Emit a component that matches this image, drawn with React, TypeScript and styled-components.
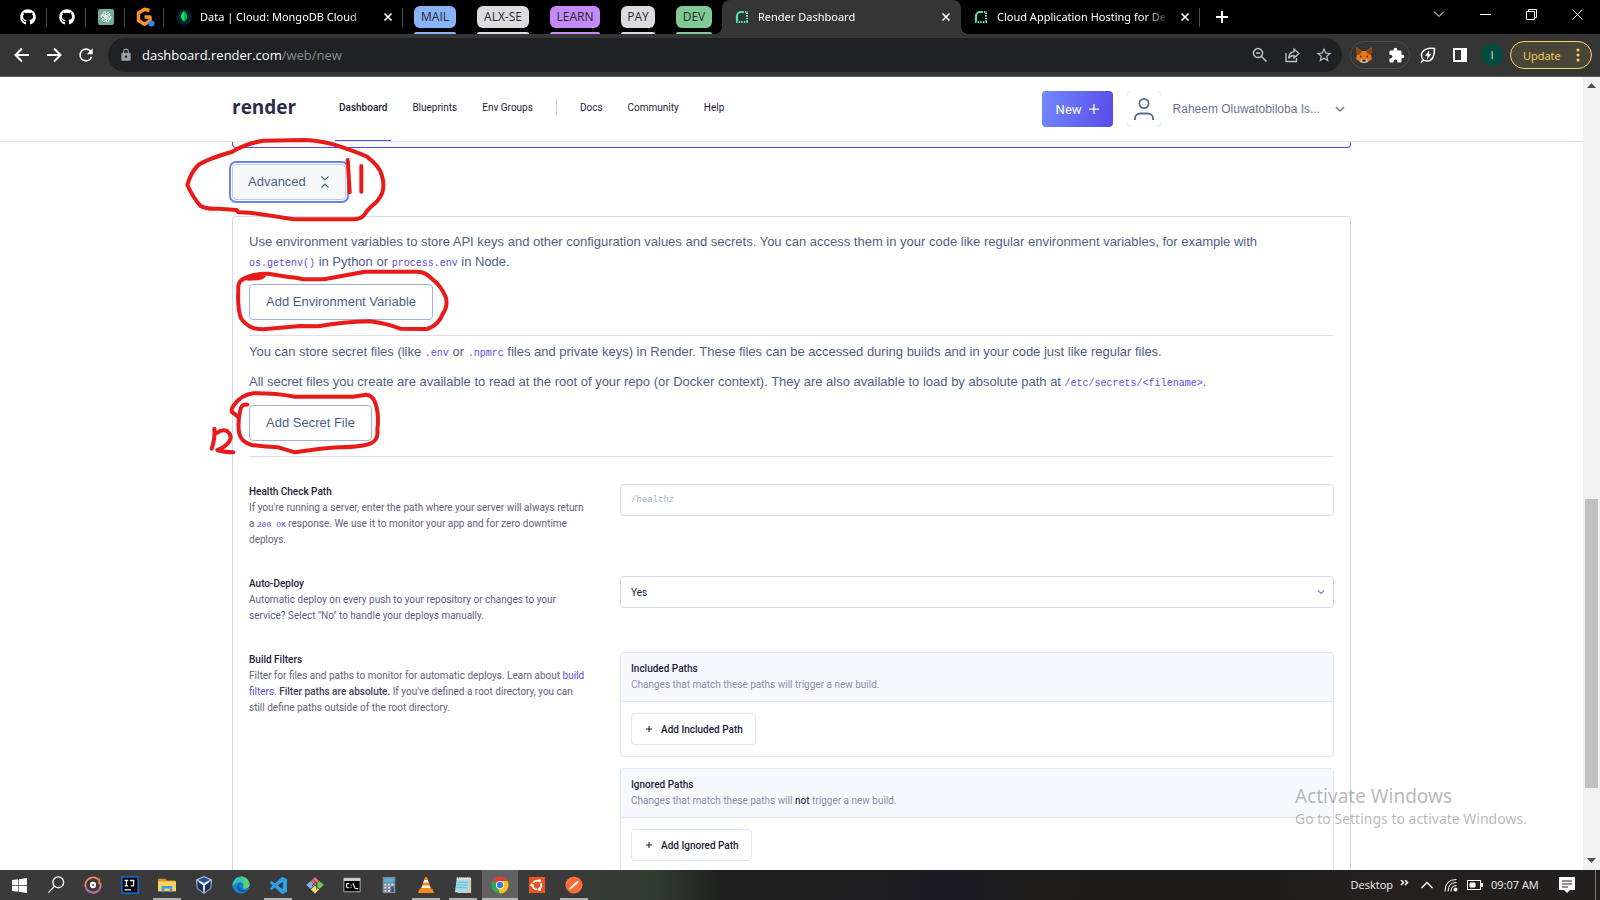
import React, { ReactNode } from "react";
import styled, { createGlobalStyle, css } from "styled-components";
import { FaGithub, FaWindows, FaUbuntu } from "react-icons/fa";
import { TbBrandOpenai } from "react-icons/tb";
import { MdExtension, MdLock, MdStarBorder } from "react-icons/md";

const pageFont = `Roboto, "Liberation Sans", sans-serif`;
const bodyFont = `"Liberation Sans", Roboto, sans-serif`;
const systemFont = `"Open Sans", "Noto Sans", sans-serif`;
const tabFont = `"Noto Sans", "Open Sans", sans-serif`;
const monoFont = `"Liberation Mono", monospace`;

const color = {
  ink: "#1d1b3a",
  text: "#4d5f8a",
  textSmall: "#5f5e84",
  muted: "#8b8bb0",
  accent: "#5a4de6",
  line: "#cddaf0",
  lineSoft: "#dce5f9",
  buttonLine: "#a3b1d9",
};

const GlobalStyle = createGlobalStyle`
  * { box-sizing: border-box; }
  html, body { margin: 0; }
  body { background: #fff; overflow: hidden; }
  button, input, select { font: inherit; color: inherit; margin: 0; }
  button { cursor: pointer; }
  p, h1, h2, h3 { margin: 0; }
`;

const Screen = styled.div`
  position: relative;
  display: flex;
  flex-direction: column;
  height: 100vh;
  font-family: ${pageFont};
`;

/* ---------- tab strip ---------- */

const TabStrip = styled.div`
  display: flex;
  height: 34px;
  padding-left: 8px;
  background: #000;
  color: #fff;
  font: 11px/16px ${tabFont};
`;

const PlainButton = styled.button`
  display: flex;
  align-items: center;
  justify-content: center;
  padding: 0;
  border: 0;
  background: none;
`;

const PinnedTab = styled(PlainButton)`
  position: relative;
  width: 39px;
  color: #fff;
  &::after {
    content: "";
    position: absolute;
    right: 0;
    top: 8px;
    width: 1px;
    height: 19px;
    background: #4a4a4a;
  }
`;

const TabBox = styled.div<{ $active?: boolean; $divider?: boolean }>`
  position: relative;
  display: flex;
  align-items: center;
  gap: 8px;
  flex: 0 1 239px;
  min-width: 0;
  padding: 0 8px 0 12px;
  ${(p) =>
    p.$active &&
    css`
      background: #353535;
      border-radius: 8px 8px 0 0;
      &::before,
      &::after {
        content: "";
        position: absolute;
        bottom: 0;
        width: 8px;
        height: 8px;
      }
      &::before {
        left: -8px;
        background: radial-gradient(circle at 0 0, transparent 8px, #353535 8px);
      }
      &::after {
        right: -8px;
        background: radial-gradient(circle at 100% 0, transparent 8px, #353535 8px);
      }
    `}
  ${(p) =>
    p.$divider &&
    css`
      &::after {
        content: "";
        position: absolute;
        right: 0;
        top: 8px;
        width: 1px;
        height: 19px;
        background: #4a4a4a;
      }
    `}
`;

const TabTitle = styled.span`
  flex: 1;
  min-width: 0;
  overflow: hidden;
  white-space: nowrap;
  mask-image: linear-gradient(to right, #000 calc(100% - 24px), transparent);
`;

const TabClose = styled(PlainButton)`
  width: 14px;
  height: 20px;
  color: #fff;
`;

const GroupChip = styled.button<{ $color: string; $width: number }>`
  display: flex;
  flex-direction: column;
  justify-content: space-between;
  flex: 0 0 ${(p) => p.$width}px;
  height: 34px;
  padding: 6px 0 0;
  border: 0;
  background: none;
  color: #26282c;
  font: 12px/22px ${systemFont};
  span {
    align-self: stretch;
    height: 22px;
    border-radius: 6px;
    background: ${(p) => p.$color};
    text-align: center;
  }
  &::after {
    content: "";
    align-self: stretch;
    height: 2px;
    border-radius: 2px 2px 0 0;
    background: ${(p) => p.$color};
  }
`;

const ChipGroup = styled.div`
  display: flex;
  gap: 21px;
  margin: 0 10px 0 11px;
`;

const NewTab = styled(PlainButton)`
  width: 28px;
  margin-left: 8px;
  color: #fff;
`;

const WindowControls = styled.div`
  display: flex;
  height: 28px;
  margin-left: auto;
`;

const WindowButton = styled(PlainButton)`
  width: 46px;
  color: #fff;
`;

/* ---------- toolbar ---------- */

const Toolbar = styled.div`
  display: flex;
  align-items: center;
  height: 43px;
  padding: 0 8px 0 6px;
  background: #353535;
  border-bottom: 1px solid #5c5c5c;
  font-family: ${systemFont};
`;

const IconButton = styled(PlainButton)<{ $dim?: boolean }>`
  flex: 0 0 32px;
  height: 32px;
  color: ${(p) => (p.$dim ? "#bdc1c6" : "#fff")};
`;

const Omnibox = styled.div`
  display: flex;
  align-items: center;
  flex: 1;
  min-width: 0;
  height: 34px;
  margin: 0 8px 0 6px;
  padding: 0 2px 0 11px;
  border-radius: 17px;
  background: #202124;
  color: #9aa0a6;
`;

const Address = styled.span`
  flex: 1;
  margin-left: 9px;
  font-size: 13px;
  line-height: 20px;
  color: #888b8f;
  b {
    font-weight: 400;
    color: #fff;
  }
`;

const ExtensionPill = styled.div`
  display: flex;
  align-items: center;
  justify-content: center;
  width: 60px;
  height: 28px;
  margin-right: 2px;
  overflow: hidden;
  border: 1px solid #4d4d4d;
  border-radius: 14px;
`;

const ProfileBadge = styled.span`
  display: flex;
  align-items: center;
  justify-content: center;
  width: 22px;
  height: 22px;
  border-radius: 50%;
  background: #004d40;
  color: #d5e3e0;
  font: 11px/22px ${systemFont};
`;

const UpdateButton = styled.button`
  display: flex;
  align-items: center;
  justify-content: space-between;
  width: 82px;
  height: 28px;
  margin-left: 2px;
  padding: 0 11px 0 12px;
  border: 1px solid #fdd663;
  border-radius: 14px;
  background: #494537;
  color: #fdd663;
  font-size: 11px;
`;

/* ---------- page ---------- */

const Viewport = styled.div`
  display: flex;
  flex: 1;
  min-height: 0;
  overflow: hidden;
`;

const Page = styled.div`
  flex: 1;
  min-width: 0;
  overflow: hidden;
  background: #fff;
`;

const Container = styled.div`
  position: relative;
  max-width: 1119px;
  margin: 0 auto;
`;

const SiteHeader = styled.header`
  border-bottom: 1px solid #dde6f3;
`;

const HeaderRow = styled(Container)`
  display: flex;
  align-items: center;
  height: 64px;
`;

const Logo = styled.a`
  width: 63px;
  margin-right: 40px;
  margin-bottom: 4px;
  color: #2f2b4f;
  font: 700 19px/24px ${systemFont};
  text-decoration: none;
`;

const Nav = styled.nav`
  display: flex;
  align-self: stretch;
  align-items: stretch;
  gap: 17px;
`;

const NavLink = styled.a<{ $current?: boolean }>`
  display: flex;
  align-items: center;
  padding: 0 4px 4px;
  color: ${color.ink};
  font-size: 10px;
  font-weight: ${(p) => (p.$current ? 500 : 400)};
  text-decoration: none;
  box-shadow: ${(p) => (p.$current ? `inset 0 -1px ${color.accent}` : "none")};
`;

const NavDivider = styled.span`
  align-self: center;
  width: 1px;
  height: 16px;
  margin: 0 2px 4px;
  background: #c5d3ea;
`;

const NewButton = styled.button`
  display: flex;
  align-items: center;
  justify-content: center;
  gap: 7px;
  width: 71px;
  height: 36px;
  margin: 0 13px 0 auto;
  border: 0;
  border-radius: 4px;
  background: linear-gradient(100deg, #7189ff, #594be6);
  color: #fff;
  font-size: 13px;
`;

const UserMenu = styled.button`
  display: flex;
  align-items: center;
  padding: 0 6px 0 0;
  border: 0;
  background: none;
  color: #6b7399;
  font: 12px/16px ${bodyFont};
  svg:first-child {
    margin-right: 11px;
  }
  svg:last-child {
    margin-left: 15px;
  }
`;

const Main = styled.main`
  padding-bottom: 40px;
`;

const PlanCardEdge = styled.div`
  height: 6px;
  border: 1px solid ${color.accent};
  border-top: 0;
  border-radius: 0 0 4px 4px;
  background: #f6f9ff;
`;

const OutlineButton = styled.button`
  display: flex;
  align-items: center;
  justify-content: center;
  height: 36px;
  padding: 0 16px;
  border: 1px solid ${color.buttonLine};
  border-radius: 4px;
  background: #fff;
  color: ${color.text};
  font: 13px/20px ${bodyFont};
`;

const AdvancedButton = styled(OutlineButton)`
  justify-content: space-between;
  width: 114px;
  margin: 16px 0;
  padding: 0 14px 0 15px;
  border-color: #c0cbe6;
  background: #f6fafc;
  outline: 2px solid #6c82fb;
  outline-offset: 1px;
`;

const Panel = styled.section`
  padding: 15px 16px 16px;
  border: 1px solid ${color.line};
  border-radius: 4px;
`;

const BodyText = styled.p`
  color: ${color.text};
  font: 13px/20px ${bodyFont};
`;

const Code = styled.code<{ $small?: boolean }>`
  color: ${color.accent};
  font-family: ${monoFont};
  font-size: ${(p) => (p.$small ? 8 : 10)}px;
  line-height: 10px;
`;

const EnvBlock = styled.div`
  display: flex;
  flex-direction: column;
  align-items: flex-start;
  gap: 12px;
  padding-bottom: 15px;
  border-bottom: 1px solid #dcdfe6;
`;

const SecretBlock = styled(EnvBlock)`
  gap: 10px;
  padding-top: 6px;
  ${OutlineButton} {
    margin-top: 3px;
  }
`;

const Fields = styled.div`
  display: flex;
  flex-direction: column;
  gap: 28px;
  padding-top: 27px;
`;

const FieldRow = styled.div`
  display: grid;
  grid-template-columns: 339px minmax(0, 1fr);
  column-gap: 32px;
  align-items: start;
`;

const FieldLabel = styled.label`
  display: block;
  color: ${color.ink};
  font-size: 10px;
  font-weight: 500;
  line-height: 16px;
`;

const FieldHelp = styled.p<{ $muted?: boolean }>`
  color: ${(p) => (p.$muted ? color.muted : color.textSmall)};
  font-size: 10px;
  line-height: 16px;
  a {
    color: ${color.accent};
    text-decoration: none;
  }
  strong {
    color: #3f3d63;
    font-weight: 500;
  }
`;

const TextInput = styled.input`
  width: 100%;
  height: 32px;
  padding: 0 10px;
  border: 1px solid ${color.line};
  border-radius: 4px;
  background: #fff;
  font: 9px/16px ${monoFont};
  &::placeholder {
    color: #a5b2d3;
    opacity: 1;
  }
`;

const SelectWrap = styled.div`
  position: relative;
  svg {
    position: absolute;
    right: 9px;
    top: 12px;
    color: #8583a3;
    pointer-events: none;
  }
`;

const Select = styled.select`
  display: block;
  appearance: none;
  width: 100%;
  height: 32px;
  padding: 0 10px;
  border: 1px solid ${color.line};
  border-radius: 4px;
  background: #fff;
  color: ${color.ink};
  font-size: 10px;
`;

const PathCards = styled.div`
  display: flex;
  flex-direction: column;
  gap: 11px;
`;

const PathCard = styled.section`
  border: 1px solid ${color.lineSoft};
  border-radius: 4px;
`;

const PathHead = styled.div`
  padding: 8px 10px;
  border-bottom: 1px solid ${color.lineSoft};
  border-radius: 3px 3px 0 0;
  background: #f8f9fe;
`;

const PathTitle = styled.h3`
  color: ${color.ink};
  font-size: 10px;
  font-weight: 500;
  line-height: 16px;
`;

const PathBody = styled.div`
  padding: 11px 10px;
`;

const AddPathButton = styled.button`
  display: flex;
  align-items: center;
  gap: 9px;
  height: 32px;
  padding: 0 12px 0 14px;
  border: 1px solid ${color.lineSoft};
  border-radius: 4px;
  background: #fff;
  color: ${color.ink};
  font-size: 10px;
  font-weight: 500;
`;

const Markup = styled.svg`
  position: absolute;
  left: -62px;
  top: -12px;
  width: 300px;
  height: 340px;
  overflow: visible;
  pointer-events: none;
`;

const Watermark = styled.div`
  position: absolute;
  right: 70px;
  bottom: 71px;
  width: 235px;
  color: rgba(125, 125, 125, 0.55);
  font: 14px/20px ${tabFont};
  white-space: nowrap;
  pointer-events: none;
  strong {
    display: block;
    font-size: 19px;
    font-weight: 400;
    line-height: 26px;
  }
`;

/* ---------- scrollbar ---------- */

const ScrollTrack = styled.div`
  display: flex;
  flex-direction: column;
  align-items: center;
  width: 17px;
  padding: 5px 0 6px;
  background: #f1f1f1;
`;

const ScrollSpace = styled.div<{ $grow: number }>`
  flex: ${(p) => p.$grow} 1 0;
`;

const ScrollThumb = styled.div`
  flex: 289 1 0;
  width: 13px;
  background: #c1c1c1;
`;

/* ---------- taskbar ---------- */

const Taskbar = styled.div`
  display: flex;
  height: 30px;
  padding-left: 1px;
  background: linear-gradient(
    to right,
    #3a3a3a 0,
    #3a3a3a 35%,
    #333e33 38%,
    #2f3d2f 41%,
    #1f1f1f 45%,
    #1e1e20 55%,
    #1b1a25 59%,
    #1e1d1c 64%,
    #1c1b1a 78%,
    #252020 85%,
    #241f1f 100%
  );
  color: #f2f2f2;
  font: 11px/16px ${systemFont};
`;

const TaskButton = styled(PlainButton)<{ $state?: "open" | "active" }>`
  flex: 0 0 36px;
  margin-right: 1px;
  color: #fff;
  ${(p) =>
    p.$state === "active" &&
    css`
      background: #626262;
      box-shadow: inset 0 -2px #b5b5b5;
    `}
  ${(p) =>
    p.$state === "open" &&
    css`
      background: linear-gradient(#b0b0b0, #b0b0b0) center bottom / 28px 2px no-repeat;
    `}
`;

const Tray = styled.div`
  display: flex;
  align-items: center;
  margin-left: auto;
`;

const TrayIcon = styled(PlainButton)<{ $width: number }>`
  width: ${(p) => p.$width}px;
  height: 30px;
  color: #fff;
`;

const Clock = styled.span`
  width: 66px;
  padding-left: 6px;
  white-space: nowrap;
`;

const ShowDesktop = styled(PlainButton)`
  width: 5px;
  height: 30px;
  margin-left: 12px;
  border-left: 1px solid #777;
`;

/* ---------- drawings ---------- */

type StrokeProps = { d: string; size?: number; box?: number; width?: number };
const Stroke = ({ d, size = 16, box = 16, width = 1 }: StrokeProps) => (
  <svg width={size} height={size} viewBox={`0 0 ${box} ${box}`} fill="none" stroke="currentColor" strokeWidth={width}>
    <path d={d} />
  </svg>
);

const CloseGlyph = () => <Stroke size={10} box={10} width={1.7} d="M1.5 1.5l7 7M8.5 1.5l-7 7" />;

const RenderMark = () => (
  <svg width="16" height="16" viewBox="0 0 16 16" fill="none" stroke="#4ce0b3" strokeWidth="2">
    <path d="M3 12V7a4 4 0 0 1 4-4h3" strokeWidth="2.2" />
    <path d="M11 3h3M13 3.5v9" strokeDasharray="1.6 1" />
    <path d="M2 13h12" strokeDasharray="1.6 1" />
  </svg>
);

const MongoMark = () => (
  <svg width="16" height="16" viewBox="0 0 16 16">
    <circle cx="8" cy="8" r="8" fill="#001e2b" />
    <path d="M8 2c2.4 2.3 3 4 3 5.6 0 2-1.3 3.6-2.7 4.6L8 14l-.3-1.8C6.3 11.2 5 9.6 5 7.600 5 6 5.6 4.3 8 2z" fill="#00ed64" />
    <path d="M8 2c2.4 2.3 3 4 3 5.6 0 2-1.3 3.6-2.7 4.6L8 14z" fill="#00b34a" />
  </svg>
);

const ChatMark = () => (
  <svg width="16" height="16" viewBox="0 0 16 16">
    <rect width="16" height="16" rx="2" fill="#74aa9c" />
    <TbBrandOpenai x={2} y={2} size={12} color="#fff" />
  </svg>
);

const HexGMark = () => (
  <svg width="20" height="20" viewBox="0 0 20 20">
    <path d="M14.5 3.5L9.5 2.200 3.5 6v7.500l6 3.800 5.500-3.500V10H9.500" fill="none" stroke="#f7922d" strokeWidth="3.4" strokeLinejoin="round" />
    <circle cx="16.5" cy="16.5" r="3" fill="#3b82f6" />
  </svg>
);

const FoxMark = () => (
  <svg width="18" height="18" viewBox="0 0 18 18">
    <path d="M1 1l6 4h4l6-4-1 7 1 5-4 3H5l-4-3 1-5z" fill="#e2761b" />
    <path d="M1 1l6 4-2 3-3 1zM17 1l-6 4 2 3 3 1z" fill="#8f4a1c" />
    <path d="M5 9l2 2-2 .5zM13 9l-2 2 2 .5z" fill="#233447" />
    <path d="M5 16l1-3 2 1h2l2-1 1 3-3 1H8z" fill="#d7c1b3" />
    <path d="M7.5 14h3l.3 1.5H7.2z" fill="#161616" />
  </svg>
);

const ReloadMark = () => (
  <svg width="20" height="20" viewBox="0 0 24 24" fill="currentColor">
    <path d="M17.65 6.35A7.96 7.96 0 0 0 12 4a8 8 0 1 0 7.73 10h-2.08A6 6 0 1 1 12 6c1.66 0 3.14.69 4.22 1.78L13 11h7V4z" />
  </svg>
);

const LeafMark = () => (
  <svg width="18" height="18" viewBox="0 0 18 18" fill="none" stroke="#fff" strokeWidth="1.5">
    <path d="M15.5 2.5C8 1.5 2.5 4 2.5 9.500c0 3.500 2.700 5.500 5.500 5.500 5.500 0 7.500-5 7.500-12.500zM2 16.500l3-3" />
    <path d="M10 5L6.500 9.500H9L8 13l4-4.700H9.500z" fill="#fff" strokeWidth=".5" />
  </svg>
);

const PersonMark = () => (
  <svg width="36" height="36" viewBox="0 0 36 36" fill="none" stroke="#5a6b93" strokeWidth="1.8">
    <path d="M1 5V4a3 3 0 0 1 3-3h1M31 1h1a3 3 0 0 1 3 3v1M35 31v1a3 3 0 0 1-3 3h-1M5 35H4a3 3 0 0 1-3-3v-1" stroke="#dff3fb" strokeWidth="1" />
    <circle cx="18" cy="12.5" r="4.6" />
    <path d="M9 29v-1.500a5 5 0 0 1 5-5h8a5 5 0 0 1 5 5V29" />
  </svg>
);

const Svg20 = ({ children }: { children: ReactNode }) => (
  <svg width="18" height="18" viewBox="0 0 20 20" fill="none">
    {children}
  </svg>
);

const taskIcons: { name: string; state?: "open" | "active"; icon: ReactNode }[] = [
  { name: "Start", icon: <FaWindows size={17} /> },
  {
    name: "Search",
    icon: (
      <Svg20>
        <circle cx="12.5" cy="7" r="6" stroke="#fff" strokeWidth="1.5" />
        <path d="M8.2 11.5L1.5 18.5" stroke="#fff" strokeWidth="1.5" />
      </Svg20>
    ),
  },
  {
    name: "Music",
    icon: (
      <Svg20>
        <path d="M16 4a8.5 8.5 0 1 0 2.300 4" stroke="#f0835f" strokeWidth="2" />
        <path d="M2 12a8.5 8.5 0 0 0 16 1" stroke="#a764b8" strokeWidth="2" />
        <circle cx="10" cy="10" r="3.5" fill="#fff" />
        <circle cx="10" cy="10" r="1" fill="#444" />
        <path d="M17 3v6" stroke="#f0835f" strokeWidth="2" />
      </Svg20>
    ),
  },
  {
    name: "IntelliJ IDEA",
    icon: (
      <Svg20>
        <rect x="1" y="1" width="18" height="18" fill="#000" stroke="#087cfa" strokeWidth="1.5" />
        <path d="M4 5h4M6 5v6M4 11h4M10 5h4v5q0 1-1 1h-2M4 15.5h7" stroke="#fff" strokeWidth="1.4" />
      </Svg20>
    ),
  },
  {
    name: "File Explorer",
    state: "open",
    icon: (
      <Svg20>
        <path d="M0 3h8l2 2h9v5H0z" fill="#d9951d" />
        <path d="M0 6h20v11H0z" fill="#ffd45c" />
        <path d="M4 18v-6q0-1 1-1h10q1 0 1 1v6h-3v-4H7v4z" fill="#3f9be0" />
      </Svg20>
    ),
  },
  {
    name: "VirtualBox",
    icon: (
      <Svg20>
        <path d="M10 0l9 4-1 10-8 6-8-6L1 4z" fill="#9db9e4" />
        <path d="M2.500 5.500L9 9v9l-6-4.500zM17.500 5.500L11 9v9l6-4.500z" fill="#17305e" />
        <path d="M10 1.500l6.500 3L10 7.500l-6.500-3z" fill="#2c4f8c" />
        <path d="M4.500 6l5.500 4 5.500-4M10 10v6" stroke="#fff" strokeWidth="1.6" />
      </Svg20>
    ),
  },
  {
    name: "Edge",
    icon: (
      <Svg20>
        <circle cx="10" cy="10" r="9.5" fill="#1b7fd4" />
        <path d="M.8 8A9.500 9.500 0 0 1 19.500 9c0 4-3 5-5.500 5-1.500 0-2-1-1.500-2 1-3-1-5-4-5-3.500 0-6.500 2-7.700 5z" fill="#35c1b0" />
        <path d="M10 .5A9.500 9.500 0 0 1 19.500 9c0 4-3 5-5.500 5-1.500 0-2-1-1.500-2 2-5-1-9-2.500-11.500z" fill="#5fd36a" />
        <path d="M9 8c-3 4 1 9 7 7.500l1 .5c-6 4-12 0-11-5 .3-1.500 1.500-2.700 3-3z" fill="#0c59a4" />
      </Svg20>
    ),
  },
  {
    name: "Visual Studio Code",
    state: "open",
    icon: (
      <svg width="17" height="17" viewBox="0 0 24 24" fill="#2f9fe8">
        <path d="M23.15 2.587L18.21.21a1.494 1.494 0 0 0-1.705.29l-9.46 8.63-4.12-3.128a.999.999 0 0 0-1.276.057L.327 7.261A1 1 0 0 0 .326 8.74L3.899 12 .326 15.26a1 1 0 0 0 .001 1.479L1.65 17.94a.999.999 0 0 0 1.276.057l4.12-3.128 9.46 8.63a1.492 1.492 0 0 0 1.704.29l4.942-2.377A1.5 1.5 0 0 0 24 20.06V3.939a1.5 1.5 0 0 0-.85-1.352zm-5.146 14.861L10.826 12l7.178-5.448v10.896z" />
      </svg>
    ),
  },
  {
    name: "Git Bash",
    icon: (
      <Svg20>
        <path d="M10 1l4.500 4.500L10 10 5.500 5.500z" fill="#f0706a" />
        <path d="M5 5.500L9.500 10 5 14.500.5 10z" fill="#7fb2ea" />
        <path d="M15 5.500l4.500 4.500-4.500 4.500-4.500-4.500z" fill="#76c35a" />
        <path d="M10 10.500l4.500 4.500-4.500 4.500L5.500 15z" fill="#f5e06a" />
        <path d="M8 4l4 4v7M10 7l-3 4" stroke="#333" strokeWidth="1" />
      </Svg20>
    ),
  },
  {
    name: "Command Prompt",
    icon: (
      <Svg20>
        <rect x="1" y="2.5" width="18" height="15" fill="#000" stroke="#b9b9b9" />
        <path d="M1 4h18" stroke="#d5d5d5" strokeWidth="3" />
        <path d="M7 8.500H5q-1 0-1 1V12q0 1 1 1h2M9 9.500v1M9 12v1M11 8l2.500 6M14 14h3" stroke="#fff" strokeWidth="1.2" />
      </Svg20>
    ),
  },
  {
    name: "Calculator",
    icon: (
      <Svg20>
        <rect x="3" y="1" width="14" height="18" fill="#7d8b99" />
        <rect x="5" y="3" width="10" height="3.5" fill="#3fc0f0" />
        <path d="M5 9.500h6M5 13h6M5 16.500h6" stroke="#e8edf2" strokeWidth="2" strokeDasharray="2 2" />
        <rect x="12.5" y="12" width="2.5" height="5.5" fill="#1a4f93" />
        <rect x="12.5" y="8.5" width="2.5" height="2" fill="#e8edf2" />
      </Svg20>
    ),
  },
  {
    name: "VLC",
    state: "open",
    icon: (
      <Svg20>
        <path d="M3 14h14l2 5H1z" fill="#f28a1c" />
        <path d="M9 1h2l5 14q-6 3-12 0z" fill="#f28a1c" />
        <path d="M8 4.500h4l1 3H7zM6 10.500h8l1 2.800H5z" fill="#f4f0ea" />
      </Svg20>
    ),
  },
  {
    name: "Notepad",
    state: "open",
    icon: (
      <Svg20>
        <path d="M5 2h14v17H4z" fill="#d9cfae" />
        <path d="M3 3h14l-1 15H1z" fill="#a3dbe8" />
        <path d="M3.500 7h12M3 10h12M2.500 13h12" stroke="#63a9bc" strokeWidth=".8" />
        <path d="M3 2.500h15" stroke="#eef4f5" strokeWidth="2.5" strokeDasharray="1.2 1" />
      </Svg20>
    ),
  },
  {
    name: "Chrome",
    state: "active",
    icon: (
      <Svg20>
        <path d="M10 10L1.800 5.250A9.500 9.500 0 0 1 18.200 5.250z" fill="#e33b2e" />
        <path d="M10 10l8.200-4.750A9.500 9.500 0 0 1 10 19.500z" fill="#fbc116" />
        <path d="M10 10v9.500A9.500 9.500 0 0 1 1.800 5.250z" fill="#2da94f" />
        <path d="M10 5.500h8.300L14 12l-4 7.500-2-5z" fill="#fbc116" />
        <circle cx="10" cy="10" r="4.5" fill="#fff" />
        <circle cx="10" cy="10" r="3.5" fill="#3b78e7" />
      </Svg20>
    ),
  },
  {
    name: "Ubuntu",
    icon: (
      <Svg20>
        <rect x="1" y="1" width="18" height="18" fill="#e95420" />
        <circle cx="10" cy="10" r="4.8" stroke="#fff" strokeWidth="2" strokeDasharray="8.500 1.553" strokeDashoffset="3" />
        <circle cx="4.2" cy="10" r="1.7" fill="#fff" />
        <circle cx="12.9" cy="5" r="1.7" fill="#fff" />
        <circle cx="12.900" cy="15" r="1.700" fill="#fff" />
      </Svg20>
    ),
  },
  {
    name: "Postman",
    state: "open",
    icon: (
      <Svg20>
        <circle cx="10" cy="10" r="9.5" fill="#ff6c37" />
        <path d="M4.500 15.500l1.500-3 6.500-6q1-1 2.300-1 .5 1.500-.8 2.500l-6.500 6z" fill="#fff" />
      </Svg20>
    ),
  },
];

const PlusIcon = ({ size, width }: { size: number; width: number }) => (
  <Stroke size={size} box={12} width={width} d="M6 0v12M0 6h12" />
);

const Annotations = () => (
  <Markup viewBox="0 0 900 1020" fill="none" stroke="#e81b1b" strokeWidth="12" strokeLinecap="round" strokeLinejoin="round" aria-hidden>
    <path d="M200 240L145 236Q108 238 92 228Q72 208 52 165Q62 128 85 105Q110 88 185 66Q230 40 280 32L405 30Q450 32 490 43Q550 62 590 79Q630 110 635 135Q645 165 636 190Q626 215 603 230Q590 242 582 256Q572 268 550 268L370 268Q300 256 240 248L205 247Z" />
    <path d="M533 90L536 135L539 187M574 108L574 185" />
    <path d="M215 450Q203 458 205 480Q202 535 213 565Q228 585 245 592Q258 598 280 598L390 588L445 589Q520 576 600 574Q650 580 690 596L772 597Q806 585 818 552Q834 530 828 503Q812 465 785 446Q768 426 742 425L585 425L462 448L400 448Q380 442 350 440L295 431Q245 430 215 450ZM235 446Q275 446 282 437" />
    <path d="M232 824Q212 820 210 845Q202 880 208 912Q215 936 242 944Q280 950 325 952L375 967L440 958Q480 953 510 952Q580 950 602 940Q626 930 622 900Q627 860 619 828Q612 796 588 794L550 800L375 800Q310 789 250 790Q215 794 192 825Q182 838 186 846Q192 850 205 862" />
    <path d="M133 896Q136 925 125 956M142 908Q158 896 172 904Q188 918 178 934Q168 950 142 960Q160 966 190 967" />
  </Markup>
);

function TabStripBar() {
  return (
    <TabStrip>
      <PinnedTab aria-label="GitHub"><FaGithub size={16} /></PinnedTab>
      <PinnedTab aria-label="GitHub"><FaGithub size={16} /></PinnedTab>
      <PinnedTab aria-label="Chat"><ChatMark /></PinnedTab>
      <PinnedTab aria-label="Workspace"><HexGMark /></PinnedTab>
      <TabBox $divider>
        <MongoMark />
        <TabTitle>Data | Cloud: MongoDB Cloud</TabTitle>
        <TabClose aria-label="Close tab"><CloseGlyph /></TabClose>
      </TabBox>
      <ChipGroup>
        <GroupChip $color="#8ab4f8" $width={42}><span>MAIL</span></GroupChip>
        <GroupChip $color="#dadce0" $width={52}><span>ALX-SE</span></GroupChip>
        <GroupChip $color="#c58af9" $width={50}><span>LEARN</span></GroupChip>
        <GroupChip $color="#dadce0" $width={34}><span>PAY</span></GroupChip>
        <GroupChip $color="#81c995" $width={36}><span>DEV</span></GroupChip>
      </ChipGroup>
      <TabBox $active>
        <RenderMark />
        <TabTitle>Render Dashboard</TabTitle>
        <TabClose aria-label="Close tab"><CloseGlyph /></TabClose>
      </TabBox>
      <TabBox $divider>
        <RenderMark />
        <TabTitle>Cloud Application Hosting for De</TabTitle>
        <TabClose aria-label="Close tab"><CloseGlyph /></TabClose>
      </TabBox>
      <NewTab aria-label="New tab"><PlusIcon size={12} width={2} /></NewTab>
      <WindowControls>
        <WindowButton aria-label="Search tabs"><Stroke size={12} box={12} d="M1 3.5l5 5 5-5" /></WindowButton>
        <WindowButton aria-label="Minimize"><Stroke size={11} box={11} d="M0 5.5h11" /></WindowButton>
        <WindowButton aria-label="Restore"><Stroke size={11} box={11} d="M.5 2.5h8v8h-8zM2.5 2.5v-2h8v8h-2" /></WindowButton>
        <WindowButton aria-label="Close window"><Stroke size={11} box={11} d="M.5.5l10 10M10.5.5l-10 10" /></WindowButton>
      </WindowControls>
    </TabStrip>
  );
}

function ToolbarBar() {
  return (
    <Toolbar>
      <IconButton aria-label="Back"><Stroke width={2} d="M15 8H2M8 1.5L1.5 8 8 14.5" /></IconButton>
      <IconButton aria-label="Forward"><Stroke width={2} d="M1 8h13M8 1.5L14.5 8 8 14.5" /></IconButton>
      <IconButton aria-label="Reload"><ReloadMark /></IconButton>
      <Omnibox>
        <MdLock size={14} />
        <Address><b>dashboard.render.com</b>/web/new</Address>
        <IconButton $dim aria-label="Zoom"><Stroke width={1.5} d="M6 1.5a4.5 4.5 0 1 0 .01 0zM9.5 9.5l5 5M4 6h4" /></IconButton>
        <IconButton $dim aria-label="Share"><Stroke width={1.3} d="M2 6v8.500h10.500V11M10 2l5 4.500-5 4.500V8.500Q6.500 8.500 4.500 11.500 5 5.500 10 4.700z" /></IconButton>
        <IconButton $dim aria-label="Bookmark"><MdStarBorder size={18} /></IconButton>
      </Omnibox>
      <ExtensionPill>
        <IconButton aria-label="Wallet"><FoxMark /></IconButton>
        <IconButton aria-label="Extensions"><MdExtension size={17} /></IconButton>
      </ExtensionPill>
      <IconButton aria-label="Performance"><LeafMark /></IconButton>
      <IconButton aria-label="Side panel">
        <svg width="14" height="14" viewBox="0 0 14 14" fill="#fff" fillRule="evenodd">
          <path d="M0 0h14v14H0zM2 2v10h6V2z" />
        </svg>
      </IconButton>
      <IconButton aria-label="Profile"><ProfileBadge>I</ProfileBadge></IconButton>
      <UpdateButton>
        Update
        <svg width="4" height="14" viewBox="0 0 4 14" fill="currentColor">
          <circle cx="2" cy="2" r="1.5" /><circle cx="2" cy="7" r="1.5" /><circle cx="2" cy="12" r="1.5" />
        </svg>
      </UpdateButton>
    </Toolbar>
  );
}

function Header() {
  return (
    <SiteHeader>
      <HeaderRow>
        <Logo href="#home">render</Logo>
        <Nav>
          <NavLink href="#dashboard" $current>Dashboard</NavLink>
          <NavLink href="#blueprints">Blueprints</NavLink>
          <NavLink href="#env-groups">Env Groups</NavLink>
          <NavDivider />
          <NavLink href="#docs">Docs</NavLink>
          <NavLink href="#community">Community</NavLink>
          <NavLink href="#help">Help</NavLink>
        </Nav>
        <NewButton>New <PlusIcon size={10} width={1.5} /></NewButton>
        <UserMenu>
          <PersonMark />
          Raheem Oluwatobiloba Is...
          <Stroke size={10} box={10} width={1.5} d="M1 3l4 4 4-4" />
        </UserMenu>
      </HeaderRow>
    </SiteHeader>
  );
}

function PathFilter({ title, action, children }: { title: string; action: string; children: ReactNode }) {
  return (
    <PathCard>
      <PathHead>
        <PathTitle>{title}</PathTitle>
        <FieldHelp $muted>{children}</FieldHelp>
      </PathHead>
      <PathBody>
        <AddPathButton><PlusIcon size={6} width={2} />{action}</AddPathButton>
      </PathBody>
    </PathCard>
  );
}

function Settings() {
  return (
    <Main>
      <Container>
        <PlanCardEdge />
        <AdvancedButton>
          Advanced
          <Stroke size={12} box={12} width={1.2} d="M2.5.5L6 4 9.5.5M2.5 11.5L6 8l3.5 3.5" />
        </AdvancedButton>
        <Panel>
          <EnvBlock>
            <BodyText>
              Use environment variables to store API keys and other configuration values and secrets. You can access them in your code like regular environment variables, for example with
              <br />
              <Code>os.getenv()</Code> in Python or <Code>process.env</Code> in Node.
            </BodyText>
            <OutlineButton>Add Environment Variable</OutlineButton>
          </EnvBlock>
          <SecretBlock>
            <BodyText>
              You can store secret files (like <Code>.env</Code> or <Code>.npmrc</Code> files and private keys) in Render. These files can be accessed during builds and in your code just like regular files.
            </BodyText>
            <BodyText>
              All secret files you create are available to read at the root of your repo (or Docker context). They are also available to load by absolute path at <Code>/etc/secrets/&lt;filename&gt;</Code>.
            </BodyText>
            <OutlineButton>Add Secret File</OutlineButton>
          </SecretBlock>
          <Fields>
            <FieldRow>
              <div>
                <FieldLabel htmlFor="health">Health Check Path</FieldLabel>
                <FieldHelp>
                  If you're running a server, enter the path where your server will always return a <Code $small>200 OK</Code> response. We use it to monitor your app and for zero downtime deploys.
                </FieldHelp>
              </div>
              <TextInput id="health" placeholder="/healthz" />
            </FieldRow>
            <FieldRow>
              <div>
                <FieldLabel htmlFor="auto-deploy">Auto-Deploy</FieldLabel>
                <FieldHelp>
                  Automatic deploy on every push to your repository or changes to your service? Select "No" to handle your deploys manually.
                </FieldHelp>
              </div>
              <SelectWrap>
                <Select id="auto-deploy" defaultValue="Yes">
                  <option>Yes</option>
                  <option>No</option>
                </Select>
                <Stroke size={8} box={8} width={1.2} d="M1 2.5l3 3 3-3" />
              </SelectWrap>
            </FieldRow>
            <FieldRow>
              <div>
                <FieldLabel as="h3">Build Filters</FieldLabel>
                <FieldHelp>
                  Filter for files and paths to monitor for automatic deploys. Learn about <a href="#build-filters">build filters</a>. <strong>Filter paths are absolute.</strong> If you've defined a root directory, you can still define paths outside of the root directory.
                </FieldHelp>
              </div>
              <PathCards>
                <PathFilter title="Included Paths" action="Add Included Path">
                  Changes that match these paths will trigger a new build.
                </PathFilter>
                <PathFilter title="Ignored Paths" action="Add Ignored Path">
                  Changes that match these paths will <strong>not</strong> trigger a new build.
                </PathFilter>
              </PathCards>
            </FieldRow>
          </Fields>
        </Panel>
        <Annotations />
      </Container>
    </Main>
  );
}

function TaskbarBar() {
  return (
    <Taskbar>
      {taskIcons.map((t) => (
        <TaskButton key={t.name} $state={t.state} aria-label={t.name}>{t.icon}</TaskButton>
      ))}
      <Tray>
        <span>Desktop</span>
        <TrayIcon $width={24} aria-label="More toolbars"><Stroke size={10} box={10} width={1.5} d="M1 0l2.5 2.5L1 5M5 0l2.5 2.5L5 5" /></TrayIcon>
        <TrayIcon $width={20} aria-label="Hidden icons"><Stroke size={12} box={12} width={1.3} d="M.5 9L6 3.5 11.5 9" /></TrayIcon>
        <TrayIcon $width={28} aria-label="Network">
          <svg width="14" height="14" viewBox="0 0 14 14" fill="none" stroke="#fff">
            <path d="M1 13.5Q1 1.5 12.5 1.5M4 13.5Q4 4.5 12.5 4.5M7 13.5Q7 7.5 12.5 7.5" />
            <circle cx="11.5" cy="11.5" r="2" fill="#fff" stroke="none" />
          </svg>
        </TrayIcon>
        <TrayIcon $width={20} aria-label="Battery">
          <svg width="16" height="10" viewBox="0 0 16 10" fill="none" stroke="#fff">
            <rect x=".5" y=".5" width="13" height="9" />
            <path d="M3 3h5v4H3z" fill="#fff" />
            <path d="M15 3v4" strokeWidth="2" />
          </svg>
        </TrayIcon>
        <Clock>09:07 AM</Clock>
        <TrayIcon $width={32} aria-label="Notifications">
          <svg width="16" height="16" viewBox="0 0 16 16" fill="#fff">
            <path d="M0 0h16v13h-5l-3 3-3-3H0z" />
            <path d="M3 4h10M3 7h10M3 10h6" stroke="#222" />
          </svg>
        </TrayIcon>
        <ShowDesktop aria-label="Show desktop" />
      </Tray>
    </Taskbar>
  );
}

export default function App() {
  return (
    <Screen>
      <GlobalStyle />
      <TabStripBar />
      <ToolbarBar />
      <Viewport>
        <Page>
          <Header />
          <Settings />
        </Page>
        <ScrollTrack>
          <svg width="9" height="7" viewBox="0 0 9 7" fill="#505050"><path d="M4.5 1L9 6H0z" /></svg>
          <ScrollSpace $grow={410} />
          <ScrollThumb />
          <ScrollSpace $grow={69} />
          <svg width="9" height="7" viewBox="0 0 9 7" fill="#505050"><path d="M4.5 6L0 1h9z" /></svg>
        </ScrollTrack>
      </Viewport>
      <TaskbarBar />
      <Watermark>
        <strong>Activate Windows</strong>
        Go to Settings to activate Windows.
      </Watermark>
    </Screen>
  );
}
